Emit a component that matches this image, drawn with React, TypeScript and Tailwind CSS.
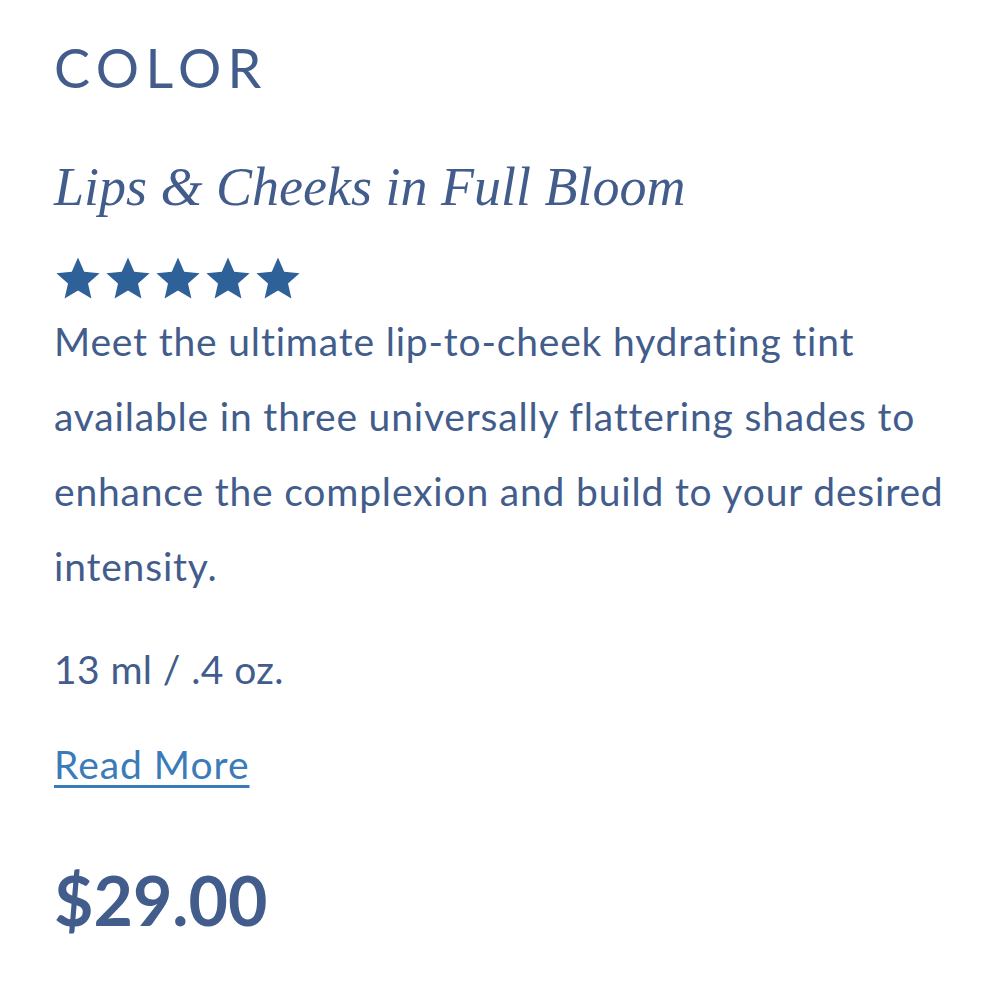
export default function App() {
  const stars = [0, 1, 2, 3, 4]
  return (
    <div className="min-h-[1000px] w-[1000px] bg-white px-[54px] pt-[38px] text-[#425d8c]" style={{ fontFamily: 'Lato, "Open Sans", sans-serif' }}>
      {/* Category */}
      <h2 className="text-[54px] leading-[60px] tracking-[0.12em] font-normal">COLOR</h2>

      {/* Product title */}
      <h1
        className="mt-[54px] text-[54px] leading-[70px] italic font-normal"
        style={{ fontFamily: '"Liberation Serif", "DejaVu Serif", serif' }}
      >
        Lips &amp; Cheeks in Full Bloom
      </h1>

      {/* Rating */}
      <div className="mt-[32px] flex items-center gap-[2px]">
        {stars.map((i) => (
          <svg key={i} viewBox="0 0 24 24" className="h-[48px] w-[48px] fill-[#2f6199]">
            <path d="M12 1.8l3.1 7.1 7.7.7-5.8 5.1 1.7 7.6L12 18.3l-6.7 4 1.7-7.6L1.2 9.6l7.7-.7z" />
          </svg>
        ))}
      </div>

      {/* Description */}
      <p className="mt-[2px] text-[39px] leading-[75px] tracking-[0.021em]">
        Meet the ultimate lip-to-cheek hydrating tint
        <br />
        available in three universally flattering shades to
        <br />
        enhance the complexion and build to your desired
        <br />
        intensity.
      </p>

      <p className="mt-[28px] text-[39px] leading-[75px] tracking-[0.01em]">13 ml / .4 oz.</p>

      <a href="#" className="mt-[32px] inline-block text-[39px] leading-[50px] tracking-[0.025em] text-[#3a7bb8] underline underline-offset-[6px] decoration-[3px]">
        Read More
      </a>

      <div className="mt-[76px] text-[68px] leading-[70px] font-bold">$29.00</div>
    </div>
  )
}
